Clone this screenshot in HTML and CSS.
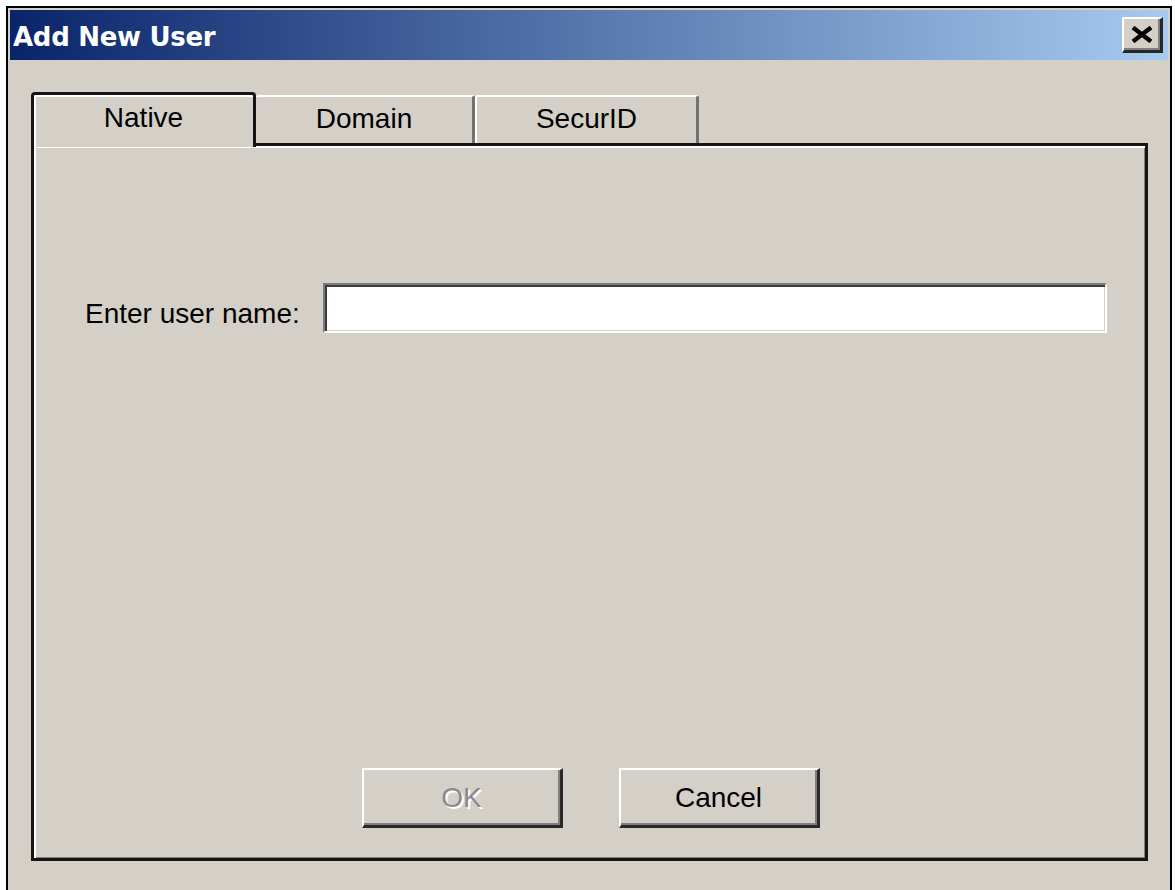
FILE: index.html
```html
<!DOCTYPE html>
<html lang="en">
<head>
<meta charset="utf-8">
<title>Add New User</title>
<link rel="stylesheet" href="styles.css">
</head>
<body>
<div class="window">
  <div class="titlebar">
    <span class="title">Add New User</span>
    <button class="close" type="button" aria-label="Close">
      <svg width="22" height="17" viewBox="0 0 22 17">
        <path d="M2 1.5 L20 15.5 M20 1.5 L2 15.5" stroke="#000" stroke-width="4.4" fill="none"/>
      </svg>
    </button>
  </div>
  <div class="content">
    <div class="tabs">
      <div class="tab tab-active">Native</div>
      <div class="tab tab-domain">Domain</div>
      <div class="tab tab-securid">SecurID</div>
    </div>
    <div class="panel">
      <div class="field-row">
        <label class="field-label" for="username">Enter user name:</label>
        <input class="field-input" id="username" type="text">
      </div>
      <div class="buttons">
        <button class="btn btn-disabled" type="button">OK</button>
        <button class="btn" type="button">Cancel</button>
      </div>
    </div>
  </div>
</div>
</body>
</html>
```

FILE: styles.css
```css
html, body {
  margin: 0;
  padding: 0;
  height: 100%;
  overflow: hidden;
  background: #ffffff;
}

body {
  font-family: "Liberation Sans", Arial, sans-serif;
  font-size: 28px;
  color: #000;
}

.window {
  margin: 6px 0 0 6px;
  width: 1166px;
  height: 920px;
  box-sizing: border-box;
  border: 2px solid #000;
  padding: 2px;
  background: #d4d0c8;
}

/* caption bar */
.titlebar {
  height: 50px;
  display: flex;
  align-items: center;
  justify-content: space-between;
  padding: 0 5px 0 3px;
  background: linear-gradient(to right, #0a246a 0%, #a6caf0 100%);
}

.title {
  font-family: "DejaVu Sans", Verdana, sans-serif;
  font-weight: bold;
  font-size: 26px;
  color: #fff;
  padding-top: 4px;
  letter-spacing: -0.3px;
}

.close {
  width: 41px;
  height: 36px;
  box-sizing: border-box;
  padding: 0;
  margin: 0;
  display: flex;
  align-items: center;
  justify-content: center;
  background: #d4d0c8;
  border-style: solid;
  border-width: 2px 3px 3px 2px;
  border-color: #fff #262626 #262626 #fff;
  box-shadow: inset -2px -2px 0 #808080;
}

/* tabbed page */
.content {
  padding: 32px 20px 0 21px;
}

.tabs {
  display: flex;
  align-items: flex-end;
  height: 51px;
}

.tab {
  box-sizing: border-box;
  display: flex;
  justify-content: center;
  background: #d4d0c8;
}

.tab-active {
  position: relative;
  z-index: 1;
  width: 225px;
  height: 55px;
  margin-bottom: -4px;
  padding-top: 7px;
  border: 3px solid #141414;
  border-bottom: none;
  border-radius: 4px 4px 0 0;
  box-shadow: inset 2px 2px 0 #fff;
}

.tab-domain,
.tab-securid {
  height: 48px;
  padding-top: 6px;
  border-top: 2px solid #fff;
  border-right: 3px solid #727272;
  border-radius: 3px 3px 0 0;
}

.tab-domain {
  width: 219px;
}

.tab-securid {
  width: 224px;
  border-left: 2px solid #fff;
}

.panel {
  height: 718px;
  box-sizing: border-box;
  border: 3px solid #141414;
  box-shadow: inset 2px 2px 0 #fff, inset -1px -1px 0 #808080;
  display: flex;
  flex-direction: column;
}

.field-row {
  display: flex;
  align-items: flex-start;
  margin: 137px 0 0 51px;
}

.field-label {
  padding-top: 15px;
  line-height: 32px;
  width: 238px;
  white-space: nowrap;
}

.field-input {
  width: 784px;
  height: 50px;
  box-sizing: border-box;
  margin: 0;
  padding: 0 6px;
  font: inherit;
  background: #fff;
  border-style: solid;
  border-width: 2px;
  border-color: #7a7a7a #fff #fff #7a7a7a;
  box-shadow: inset 2px 2px 0 #3c3c3c, inset -1px -1px 0 #d4d0c8;
  outline: none;
}

.buttons {
  margin-top: auto;
  margin-bottom: 30px;
  display: flex;
  justify-content: center;
  gap: 56px;
  padding-left: 2px;
}

.btn {
  width: 201px;
  height: 60px;
  box-sizing: border-box;
  margin: 0;
  padding: 0;
  font: inherit;
  color: #000;
  background: #d4d0c8;
  border-style: solid;
  border-width: 2px 3px 3px 2px;
  border-color: #fff #2a2a2a #2a2a2a #fff;
  box-shadow: inset -2px -2px 0 #808080;
}

.btn-disabled {
  color: #8a8a8a;
  text-shadow: 2px 2px 0 #fff;
}
```
